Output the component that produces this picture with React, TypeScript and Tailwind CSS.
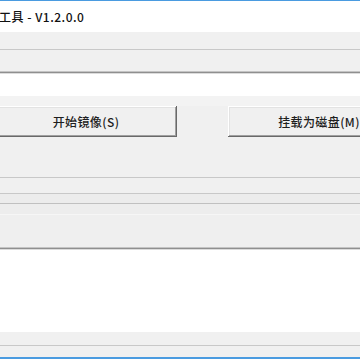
import React from "react";

const font = { fontFamily: '"Noto Sans CJK SC", "Noto Sans", sans-serif' };

function Btn({ label, className }: { label: string; className: string }) {
  return (
    <div
      className={
        "h-full shrink-0 flex items-center justify-center bg-[#f0f0f0] text-[12px] font-medium tracking-[0.4px] text-[#1e1e1e] shadow-[inset_-1px_-1px_#696969,inset_1px_1px_#ffffff,inset_-2px_-2px_#a0a0a0,inset_2px_2px_#e3e3e3] " +
        className
      }
      style={font}
    >
      {label}
    </div>
  );
}

export default function App() {
  return (
    <div className="w-[360px] h-[360px] bg-white overflow-hidden flex flex-col" style={font}>
      <div className="h-[1px] bg-[#4a9be0]" />
      <div className="h-[31px] bg-white flex items-center">
        <span className="text-[12px] font-medium tracking-[0.5px] text-[#111] leading-none -ml-[1px]">工具 - V1.2.0.0</span>
      </div>
      <div className="h-[17px] bg-[#f0f0f0]" />
      <div className="h-[1px] bg-[#c8c8c8]" />
      <div className="h-[21px] bg-[#f0f0f0]" />
      <div className="h-[1px] bg-[#c4c4c4]" />
      <div className="h-[1px] bg-[#8f8f8f]" />
      <div className="h-[1px] bg-[#dcdcdc]" />
      <div className="h-[22px] bg-white" />
      <div className="h-[10px] bg-[#f3f3f3]" />
      <div className="h-[31px] bg-[#f0f0f0] flex overflow-hidden">
        <Btn label="开始镜像(S)" className="w-[182px] -ml-[5px]" />
        <div className="w-[51px] shrink-0" />
        <Btn label="挂载为磁盘(M)" className="w-[182px]" />
      </div>
      <div className="h-[40px] bg-[#f0f0f0]" />
      <div className="h-[1px] bg-[#c8c8c8]" />
      <div className="h-[15px] bg-[#f0f0f0]" />
      <div className="h-[1px] bg-[#c8c8c8]" />
      <div className="h-[9px] bg-[#ececec]" />
      <div className="h-[1px] bg-[#c0c0c0]" />
      <div className="h-[43px] bg-[#efefef] flex flex-col">
        <div className="h-[10px] bg-[#ededed]" />
        <div className="h-[1px] bg-[#f6f6f6]" />
      </div>
      <div className="h-[1px] bg-[#c4c4c4]" />
      <div className="h-[1px] bg-[#8f8f8f]" />
      <div className="h-[1px] bg-[#dcdcdc]" />
      <div className="h-[82px] bg-white" />
      <div className="h-[13px] bg-[#f0f0f0]" />
      <div className="h-[1px] bg-[#c8c8c8]" />
      <div className="h-[11px] bg-[#f0f0f0]" />
      <div className="h-[2px] bg-[#4a9be0]" />
    </div>
  );
}
